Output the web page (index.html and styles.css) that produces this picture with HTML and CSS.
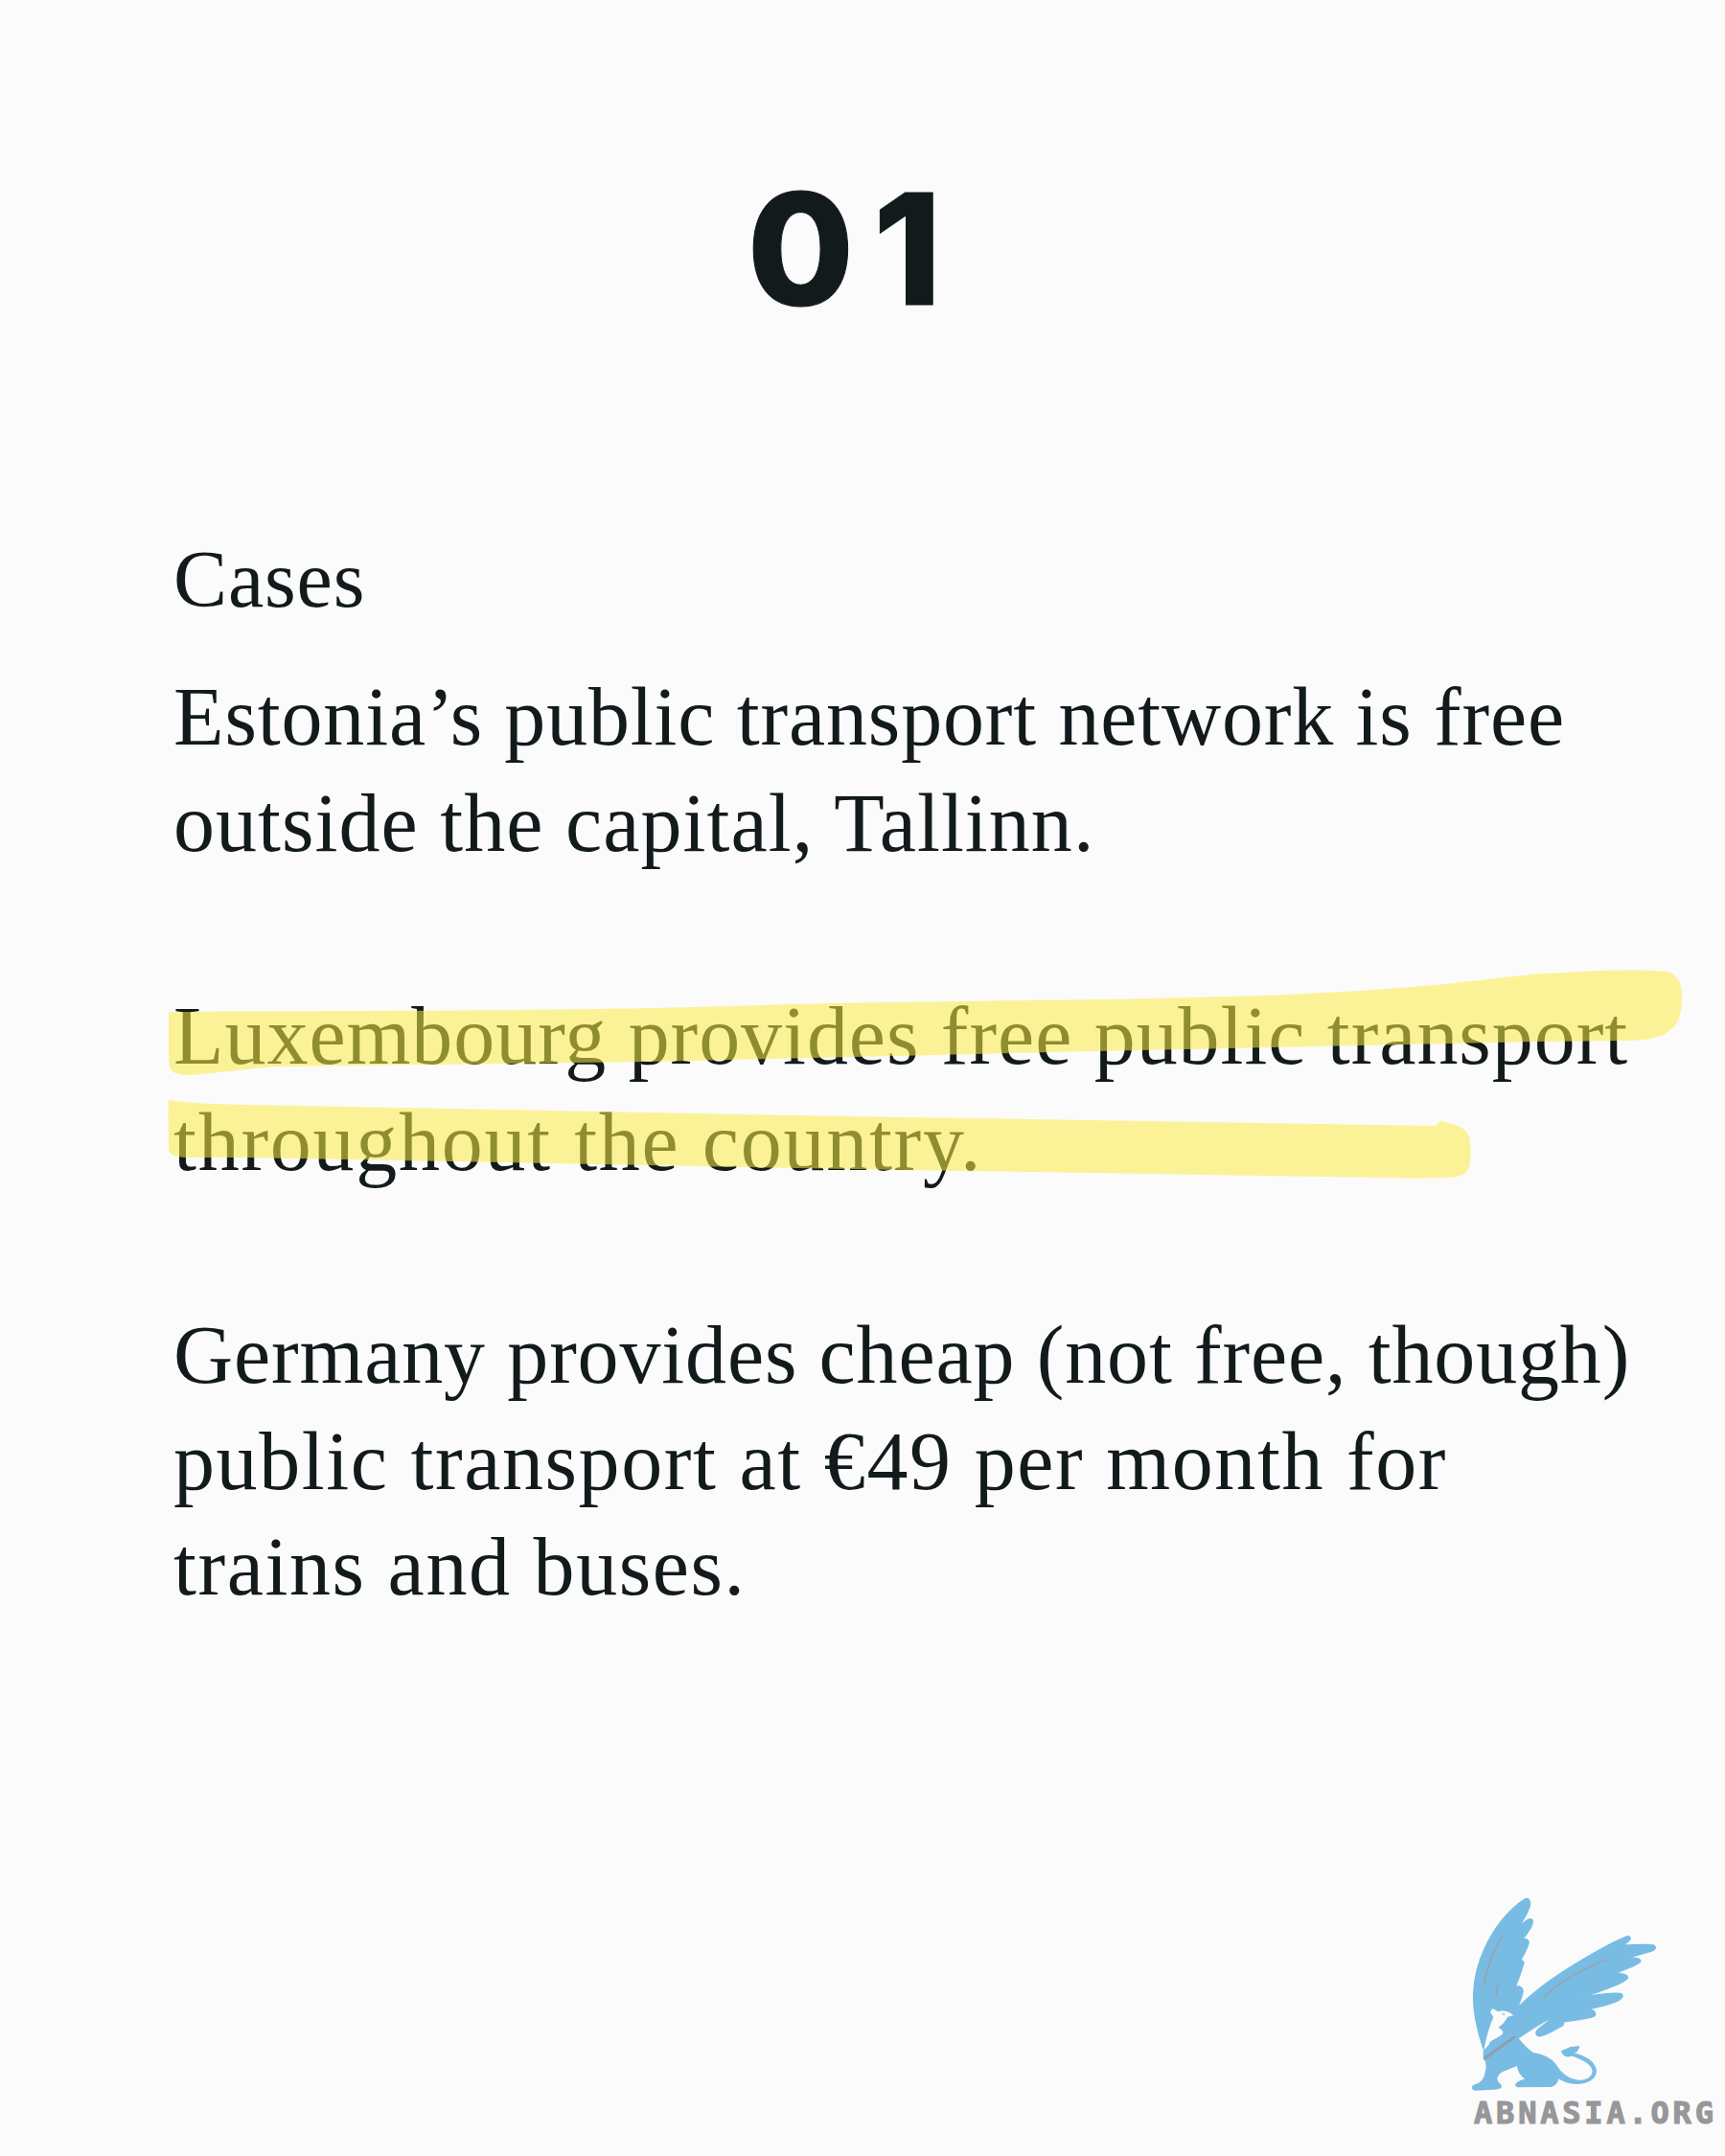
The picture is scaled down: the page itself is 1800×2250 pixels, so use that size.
FILE: index.html
```html
<!DOCTYPE html>
<html lang="en">
<head>
<meta charset="utf-8">
<title>Cases</title>
<link rel="stylesheet" href="styles.css">
</head>
<body>
<main class="slide">
  <h1 class="number">01</h1>
  <section class="content">
    <h2 class="label">Cases</h2>
    <p class="para"><span class="line">Estonia’s public transport network is free</span><span class="line line-a">outside the capital, Tallinn.</span></p>
    <p class="para"><span class="line line-d">Luxembourg provides free public transport</span><span class="line line-c">throughout the country.</span></p>
    <p class="para"><span class="line">Germany provides cheap (not free, though)</span><span class="line line-b">public transport at €49 per month for</span><span class="line line-b">trains and buses.</span></p>
  </section>
  <svg class="highlight" viewBox="0 0 1800 2250" aria-hidden="true">
    <path d="M176 1056C380 1054 620 1056 824 1048C1060 1042 1300 1046 1497 1028C1560 1022 1590 1016 1634 1015C1680 1012 1715 1012 1739 1014C1752 1018 1755 1026 1755 1040C1755 1058 1752 1068 1744 1074C1735 1082 1725 1085 1700 1086L1603 1087L1097 1098L676 1108L287 1113C250 1116 215 1122 192 1122C180 1120 176 1118 176 1105Z"/>
    <path d="M176 1148C200 1152 230 1152 255 1153L887 1165L1497 1175L1503 1170C1515 1172 1530 1176 1533 1186C1535 1195 1535 1210 1533 1218C1530 1226 1524 1228 1510 1229C1470 1230 1440 1229 1380 1228L887 1220L255 1208L192 1208C178 1206 176 1204 176 1196C176 1180 175 1162 176 1148Z"/>
  </svg>
  <div class="brand">
    <svg class="griffin" viewBox="0 0 960 700" aria-hidden="true">
      <path class="griffin-body" d="M205 568C185 510 170 450 173 390C178 270 250 150 335 95C348 92 353 105 348 120C340 145 325 165 315 182C330 170 345 152 356 160C364 170 345 200 325 222C335 218 348 222 345 235C340 252 330 270 318 290C325 285 333 292 328 302C322 325 312 350 303 372C315 365 330 372 327 388C323 405 317 420 310 437C350 395 410 350 470 312C530 275 600 232 655 212C668 212 668 225 640 240C670 240 710 236 735 240C748 245 742 256 725 260C705 266 680 272 660 280C680 278 698 282 695 292C690 302 650 315 615 328C635 328 658 332 655 343C648 356 575 385 510 403C560 395 620 388 636 392C645 400 635 412 610 420C585 430 555 435 530 441C545 442 558 447 553 460C545 470 495 474 452 480C458 485 455 492 440 498C420 510 400 522 378 525C366 522 366 512 375 503C390 490 410 478 420 466C385 482 350 505 312 532C325 548 340 565 358 578C385 582 415 592 430 615C445 640 465 660 500 664C525 666 545 655 547 635C545 610 510 595 480 585C470 590 455 590 449 572C465 565 485 558 503 558L495 573L480 577C515 585 550 600 556 632C556 658 530 672 495 673C470 673 450 665 438 655C435 670 428 680 415 682L312 683C300 680 305 672 320 665L338 660C320 650 312 630 310 615C290 625 265 632 255 640C243 650 240 665 258 678C262 688 250 690 238 690L178 693C165 692 168 680 180 677C195 672 203 665 208 650C215 625 218 610 205 590Z"/>
      <path class="griffin-light" d="M205 568C212 530 222 495 235 465L225 450L232 438L250 448C265 442 285 448 298 460L280 464C272 478 262 490 250 498C265 505 272 515 255 525L228 540C220 555 212 562 205 568Z"/>
      <path class="griffin-blue" d="M222 545L250 530L246 545L232 558Z"/>
      <path class="griffin-eye" d="M260 453L272 455L268 460Z"/>
      <path class="griffin-line" d="M205 365C215 305 240 250 265 208"/>
      <path class="griffin-line" d="M243 398L250 365"/>
      <path class="griffin-line" d="M392 405C440 355 520 310 592 285"/>
      <path class="griffin-line griffin-line-wide" d="M208 595C240 570 270 550 300 528"/>
      <path class="griffin-tail" d="M450 572L478 557L503 560L492 572L470 580Z"/>
    </svg>
    <div class="brand-name">ABNASIA.ORG</div>
  </div>
</main>
</body>
</html>
```

FILE: styles.css
```css
* {
  box-sizing: border-box;
}

html,
body {
  margin: 0;
  padding: 0;
  background: #fbfbfc;
}

.slide {
  position: relative;
  width: 1800px;
  height: 2250px;
  overflow: hidden;
  padding-top: 165px;
  color: #121a1c;
}

.number {
  margin: 0;
  height: 190px;
  padding-right: 18px;
  font-family: Inter, "Liberation Sans", sans-serif;
  font-size: 161px;
  line-height: 190px;
  font-weight: 800;
  letter-spacing: 20px;
  text-align: center;
  -webkit-text-stroke: 1px #121a1c;
}

.content {
  padding: 195px 0 0 181px;
}

.label {
  margin: 0 0 33px;
  font-family: "Liberation Serif", serif;
  font-size: 84px;
  line-height: 110px;
  font-weight: 400;
  letter-spacing: 0.85px;
}

.para {
  margin: 0 0 112px;
  font-family: "Liberation Serif", serif;
  font-size: 86px;
  line-height: 110.5px;
  font-weight: 400;
  letter-spacing: 0.85px;
  white-space: nowrap;
}

.line {
  display: block;
}

.line-a {
  letter-spacing: 1.05px;
}

.line-b {
  letter-spacing: 1.58px;
}

.line-c {
  letter-spacing: 1.75px;
}

.line-d {
  letter-spacing: 0.95px;
}

.highlight {
  position: absolute;
  left: 0;
  top: 0;
  width: 1800px;
  height: 2250px;
  fill: rgb(251, 236, 66);
  opacity: 0.54;
}

.brand {
  position: absolute;
  left: 1480px;
  top: 1950px;
  width: 320px;
}

.griffin {
  display: block;
  width: 320px;
  height: 233.3px;
}

.griffin-body {
  fill: #78bce3;
  stroke: #78bce3;
  stroke-width: 4;
  stroke-linejoin: round;
}

.griffin-blue,
.griffin-tail,
.griffin-eye {
  fill: #78bce3;
}

.griffin-light {
  fill: #fbfbfc;
}

.griffin-line {
  fill: none;
  stroke: #9aa3b0;
  stroke-width: 5;
  stroke-linecap: round;
}

.griffin-line-wide {
  stroke: #8f9fb0;
  stroke-width: 10;
}

.brand-name {
  position: absolute;
  left: 58px;
  top: 239px;
  font-family: "DejaVu Sans Mono", monospace;
  font-size: 32px;
  line-height: 32px;
  font-weight: 700;
  letter-spacing: 3.8px;
  color: #979799;
  -webkit-text-stroke: 1.2px #979799;
  white-space: nowrap;
}
```
